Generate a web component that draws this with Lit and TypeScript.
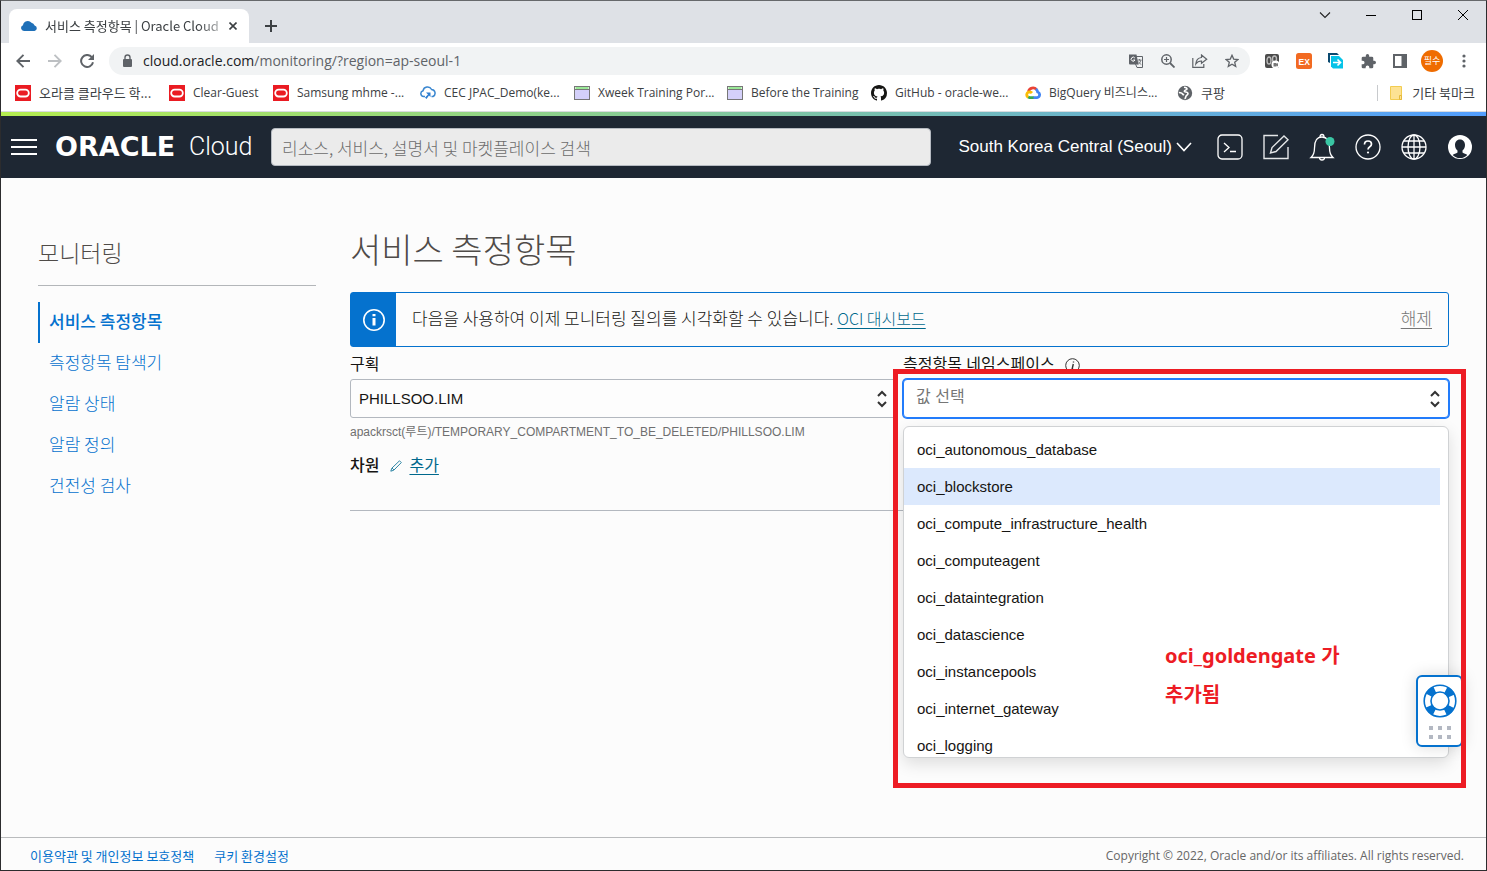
import { LitElement, html, css, svg } from "lit";
import { customElement, state } from "lit/decorators.js";
import { classMap } from "lit/directives/class-map.js";

const oracleMark = svg`<rect width="16" height="16" fill="#ea1b22"/><rect x="2.2" y="4.7" width="11.6" height="6.8" rx="3.4" fill="none" stroke="#fff" stroke-width="1.8"/>`;
const pageMark = svg`<rect x=".5" y="1.5" width="15" height="13" fill="#fff" stroke="#777"/><rect x="1" y="5" width="14" height="9" fill="#d4d0fa"/><path d="M1 4.5h14" stroke="#777"/><path d="M1.5 3h13" stroke="#6fe06a" stroke-width="1.4"/>`;
const cecMark = svg`<path d="M5 11.5H3.6A2.9 2.9 0 0 1 3 5.800A4.600 4.600 0 0 1 11.600 4.500A3.700 3.700 0 0 1 13 11.500H11.500" fill="none" stroke="#3a87d0" stroke-width="1.500"/><path d="M6 7.500h4.500V12L9 10.500L6.500 14L5 12.500L8 9.500z" fill="#2d7dd2"/>`;
const githubMark = svg`<path fill="#161614" d="M8 0C3.580 0 0 3.580 0 8c0 3.540 2.290 6.530 5.470 7.590.4.070.550-.170.550-.380 0-.190-.010-.820-.010-1.490-2.010.370-2.530-.490-2.690-.940-.090-.230-.480-.940-.820-1.130-.280-.150-.680-.520-.010-.530.630-.010 1.080.580 1.230.820.720 1.210 1.870.870 2.330.660.070-.520.280-.870.510-1.070-1.780-.200-3.640-.890-3.640-3.950 0-.870.310-1.590.820-2.150-.080-.200-.360-1.020.080-2.120 0 0 .670-.210 2.200.820.640-.180 1.320-.270 2-.270s1.360.090 2 .270c1.530-1.040 2.200-.820 2.200-.820.440 1.100.160 1.920.080 2.120.510.560.820 1.270.820 2.150 0 3.070-1.870 3.750-3.650 3.950.290.250.540.730.540 1.480 0 1.070-.010 1.930-.010 2.200 0 .210.150.460.550.380A8.010 8.010 0 0 0 16 8c0-4.420-3.580-8-8-8z"/>`;
const googleMark = svg`<g fill="none" stroke-width="2.800"><path d="M3.500 6.500A4.700 4.700 0 0 1 11.500 4.500" stroke="#ea4335"/><path d="M11 4A5 5 0 0 1 12.700 7A2.900 2.900 0 0 1 12 12.600H8" stroke="#4285f4"/><path d="M8.500 12.600H4.500L3 12" stroke="#34a853"/><path d="M3.200 12.200A2.900 2.900 0 0 1 4.500 6.800Q6 6.800 7 8" stroke="#fbbc05"/></g>`;
const globeMark = svg`<circle cx="8" cy="8" r="7.200" fill="#5f6368"/><path d="M7 2.300c2 .3 3.500.8 2.800 2.200c-1 .8-2.600.5-2.400 2c1 .8 3.500.2 3.600 2.100c-.2 1.500-2 1.500-2.200 3.200c0 1-.6 1.800-1.300 2" fill="none" stroke="#fff" stroke-width="1.600"/><path d="M1.800 7.500c2 0 3.800 1 5 2.800" stroke="#fff" stroke-width="1.700" fill="none"/>`;

const BOOKMARKS = [
  { label: "오라클 클라우드 학...", icon: oracleMark, korean: true },
  { label: "Clear-Guest", icon: oracleMark },
  { label: "Samsung mhme -...", icon: oracleMark },
  { label: "CEC JPAC_Demo(ke...", icon: cecMark },
  { label: "Xweek Training Por...", icon: pageMark },
  { label: "Before the Training", icon: pageMark },
  { label: "GitHub - oracle-we...", icon: githubMark },
  { label: "BigQuery 비즈니스...", icon: googleMark },
  { label: "쿠팡", icon: globeMark, korean: true },
];

const base = css`
  :host { display: block; box-sizing: border-box; }
  *, *::before, *::after { box-sizing: border-box; }
  button { font: inherit; color: inherit; background: none; border: 0; padding: 0; margin: 0; cursor: pointer; }
  svg { display: block; flex: none; }
`;

@customElement("browser-chrome")
class BrowserChrome extends LitElement {
  static styles = [base, css`
    :host { font: 12px/16px "Open Sans", "Noto Sans CJK KR", sans-serif; color: #3c4043; background: #fff; }
    .strip { display: flex; align-items: flex-start; height: 42px; background: #dee1e6; padding-left: 8px; }
    .tab { display: flex; align-items: center; width: 240px; height: 34px; margin-top: 8px; padding: 0 10px 0 12px; background: #fff; border-radius: 8px 8px 0 0; }
    .tab-title { flex: 1; margin-left: 8px; white-space: nowrap; -webkit-mask-image: linear-gradient(90deg, #000 88%, rgba(0,0,0,.4) 100%); }
    .korean { font: 13px/16px "Noto Sans CJK KR", sans-serif; }
    .sq { display: grid; place-items: center; width: 32px; height: 32px; flex: none; }
    .close { display: grid; place-items: center; width: 12px; height: 16px; margin-left: 8px; }
    .plus { margin: 9px 0 0 6px; }
    .wins { display: flex; margin-left: auto; }
    .win { display: grid; place-items: center; width: 46px; height: 28px; }
    .bar { display: flex; align-items: center; height: 36px; padding: 0 6px; }
    .omni { display: flex; align-items: center; flex: 1; height: 28px; margin-left: 6px; padding: 0 2px 0 10px; background: #f1f3f4; border-radius: 14px; }
    .url { flex: 1; min-width: 0; margin-left: 8px; font-size: 14px; line-height: 20px; color: #5f6368; white-space: nowrap; }
    .host { color: #202124; }
    .exts { display: flex; margin-left: 6px; }
    .me { width: 22px; height: 22px; border-radius: 11px; background: #ef6c00; color: #fff; font-size: 9px; line-height: 22px; text-align: center; }
    .marks { display: flex; align-items: center; height: 33px; padding: 0 11px 5px 14px; border-bottom: 1px solid #dadce0; }
    .list { display: grid; grid-template-columns: 154px 104px 147px 154px 153px 144px 154px 152px 60px; }
    .mark { display: flex; align-items: center; gap: 8px; color: inherit; text-decoration: none; white-space: nowrap; }
    .other { margin-left: auto; padding-left: 10px; border-left: 1px solid #c8cacd; }
  `];

  render() {
    return html`
      <div class="strip">
        <div class="tab">
          <svg width="16" height="16" viewBox="0 0 16 16"><path d="M3 13A3 3 0 0 1 2 7.200A4.800 4.800 0 0 1 10.500 4.800A4.200 4.200 0 0 1 13.600 7.500A2.800 2.800 0 0 1 13.500 13z" fill="#1f70b8"/></svg>
          <span class="tab-title korean">서비스 측정항목 | Oracle Cloud</span>
          <button class="close" aria-label="Close tab"><svg width="8" height="8" viewBox="0 0 8 8"><path d="M.500 .500l7 7M7.500 .500l-7 7" stroke="#3c4043" stroke-width="1.600"/></svg></button>
        </div>
        <button class="sq plus" aria-label="New tab"><svg width="12" height="12" viewBox="0 0 12 12"><path d="M6 0v12M0 6h12" stroke="#3c4043" stroke-width="2"/></svg></button>
        <div class="wins">
          <button class="win" aria-label="Tab search"><svg width="12" height="12" viewBox="0 0 12 12"><path d="M1 3.500l5 5l5-5" fill="none" stroke="#222" stroke-width="1.100"/></svg></button>
          <button class="win" aria-label="Minimize"><svg width="10" height="10" viewBox="0 0 10 10"><path d="M0 5.500h10" stroke="#000"/></svg></button>
          <button class="win" aria-label="Maximize"><svg width="10" height="10" viewBox="0 0 10 10"><rect x=".5" y=".5" width="9" height="9" fill="none" stroke="#000"/></svg></button>
          <button class="win" aria-label="Close"><svg width="10" height="10" viewBox="0 0 10 10"><path d="M0 0l10 10M10 0L0 10" stroke="#000"/></svg></button>
        </div>
      </div>
      <div class="bar">
        <button class="sq" aria-label="Back"><svg width="14" height="14" viewBox="0 0 14 14"><path d="M14 7H1.500M7.500 .800L1.300 7l6.200 6.200" fill="none" stroke="#5f6368" stroke-width="1.900"/></svg></button>
        <button class="sq" aria-label="Forward"><svg width="14" height="14" viewBox="0 0 14 14"><path d="M0 7h12.500M6.500 .800L12.700 7l-6.200 6.200" fill="none" stroke="#bdc0c3" stroke-width="1.900"/></svg></button>
        <button class="sq" aria-label="Reload"><svg width="14" height="14" viewBox="0 0 14 14"><path d="M11.800 3.200A6 6 0 1 0 13 8.200" fill="none" stroke="#5f6368" stroke-width="2"/><path d="M14 0v6H8z" fill="#5f6368"/></svg></button>
        <div class="omni">
          <svg width="16" height="16" viewBox="0 0 16 16"><rect x="4" y="6" width="9" height="8" rx="1" fill="#5f6368"/><path d="M6 6.500V4.500a2.500 2.500 0 0 1 5 0v2" fill="none" stroke="#5f6368" stroke-width="1.400"/></svg>
          <span class="url"><span class="host">cloud.oracle.com</span>/monitoring/?region=ap-seoul-1</span>
          <button class="sq" aria-label="Translate"><svg width="14" height="14" viewBox="0 0 14 14"><path d="M6 2.500h7.500v11H8L6.500 10" fill="#f1f3f4" stroke="#5f6368"/><path d="M0 .500h7.500l2 10H1a1 1 0 0 1-1-1z" fill="#5f6368"/><path d="M5.800 4A2 2 0 1 0 6 6H4.300" fill="none" stroke="#fff"/><path d="M8.500 6h4M10.500 5v1.500M12 6q-.5 2.500-3 4.500M9.300 7.500q1 2 3 3" fill="none" stroke="#5f6368" stroke-width=".8"/></svg></button>
          <button class="sq" aria-label="Zoom"><svg width="14" height="14" viewBox="0 0 14 14"><circle cx="5.500" cy="5.500" r="4.700" fill="none" stroke="#5f6368" stroke-width="1.500"/><path d="M9 9l4.500 4.500" stroke="#5f6368" stroke-width="1.800"/><path d="M5.500 3v5M3 5.500h5" stroke="#5f6368" stroke-width="1.200"/></svg></button>
          <button class="sq" aria-label="Share"><svg width="16" height="14" viewBox="0 0 16 14"><path d="M.8 4v9.300h11V10" fill="none" stroke="#5f6368" stroke-width="1.200"/><path d="M9.500 1l5.200 4.300l-5.200 4V7Q6 6.800 3.800 10Q4.300 4 9.500 3.500z" fill="none" stroke="#5f6368" stroke-width="1.200"/></svg></button>
          <button class="sq" aria-label="Bookmark"><svg width="14" height="14" viewBox="0 0 14 14"><path d="M7 1.300l1.700 3.800l4.200.4l-3.200 2.800l1 4.100L7 10.300l-3.700 2.100l1-4.100L1.100 5.500l4.200-.4z" fill="none" stroke="#5f6368" stroke-width="1.300"/></svg></button>
        </div>
        <div class="exts">
          <button class="sq" aria-label="Recorder"><svg width="16" height="16" viewBox="0 0 16 16"><rect x="1" y="1" width="14" height="14" rx="2" fill="#4c4c4c"/><ellipse cx="5" cy="7.500" rx="2" ry="3.500" fill="none" stroke="#bbb" stroke-width="1.400"/><ellipse cx="10.500" cy="6" rx="2" ry="3" fill="none" stroke="#bbb" stroke-width="1.400"/><circle cx="11.500" cy="11.500" r="4" fill="#fff"/><path d="M9.500 10h3v1l1.500-1v3.500l-1.500-1v1h-3z" fill="#777"/></svg></button>
          <button class="sq" aria-label="EX"><svg width="16" height="16" viewBox="0 0 16 16"><rect width="16" height="16" rx="2.500" fill="#f26a21"/><text x="2.500" y="11.500" font-family="Liberation Sans" font-weight="700" font-size="8.500" fill="#fff">EX</text></svg></button>
          <button class="sq" aria-label="Transfer"><svg width="16" height="16" viewBox="0 0 16 16"><path d="M0 0h9l2 2H2v8L0 9z" fill="#0b4a70"/><path d="M3 3h8l4 4v8.500H5l-2-2z" fill="#06c3e8"/><path d="M5 9.500h7M9.500 6.500l3 3l-3 3" fill="none" stroke="#fff" stroke-width="1.700"/></svg></button>
          <button class="sq" aria-label="Extensions"><svg width="15" height="15" viewBox="0 0 22 22"><path fill="#5f6368" d="M19.500 10H18V6a2 2 0 0 0-2-2h-4V2.500a2.500 2.500 0 0 0-5 0V4H3a2 2 0 0 0-2 2v3.800h1.500a2.700 2.700 0 0 1 0 5.400H1V19a2 2 0 0 0 2 2h3.800v-1.500a2.700 2.700 0 0 1 5.400 0V21H16a2 2 0 0 0 2-2v-4h1.500a2.500 2.500 0 0 0 0-5z"/></svg></button>
          <button class="sq" aria-label="Side panel"><svg width="14" height="14" viewBox="0 0 14 14"><rect x="1" y="1" width="12" height="12" fill="none" stroke="#5f6368" stroke-width="2"/><rect x="8.500" y="1" width="5" height="12" fill="#5f6368"/></svg></button>
          <button class="sq" aria-label="Profile"><span class="me">필수</span></button>
          <button class="sq" aria-label="Menu"><svg width="4" height="14" viewBox="0 0 4 14"><g fill="#5f6368"><circle cx="2" cy="2" r="1.600"/><circle cx="2" cy="7" r="1.600"/><circle cx="2" cy="12" r="1.600"/></g></svg></button>
        </div>
      </div>
      <div class="marks">
        <nav class="list">
          ${BOOKMARKS.map((b) => html`<a class=${classMap({ mark: true, korean: !!b.korean })} href="#"><svg width="16" height="16" viewBox="0 0 16 16">${b.icon}</svg>${b.label}</a>`)}
        </nav>
        <a class="mark other korean" href="#"><svg width="16" height="16" viewBox="0 0 16 16"><path d="M2.500 1.500h11v13h-11z" fill="#fde293" stroke="#f2cc50"/><path d="M11.500 10.500h2v4h-2z" fill="#fde293" stroke="#e5b93c"/></svg>기타 북마크</a>
      </div>`;
  }
}

@customElement("console-header")
class ConsoleHeader extends LitElement {
  static styles = [base, css`
    :host { background: #1e2733; color: #fff; }
    .rainbow { height: 4px; background: linear-gradient(90deg, #b4ed50, #7bc2a9 55%, #529eff); }
    .row { display: flex; align-items: center; height: 62px; padding: 0 13px 0 10px; }
    .brand { display: flex; align-items: center; width: 216px; margin-left: 18px; white-space: nowrap; }
    .oracle { width: 134px; font: 700 27px/32px "DejaVu Sans", sans-serif; }
    .cloud { font: 300 25px/32px Roboto, sans-serif; }
    .search { flex: 0 1 660px; height: 38px; padding: 0 10px; border: 1px solid #b5bac1; border-radius: 4px; background: #ebebeb; font: 300 17px/20px "Noto Sans CJK KR", sans-serif; color: #222; outline: 0; }
    .search::placeholder { color: #6c6c6c; opacity: 1; }
    .region { display: flex; align-items: center; gap: 4px; margin-left: auto; font: 17px/20px "Liberation Sans", sans-serif; white-space: nowrap; }
    .tools { display: flex; gap: 20px; margin-left: 25px; }
  `];

  render() {
    return html`
      <div class="rainbow"></div>
      <header class="row">
        <button aria-label="메뉴"><svg width="26" height="16" viewBox="0 0 26 16"><path d="M0 1h26M0 8h26M0 15h26" stroke="#fff" stroke-width="2"/></svg></button>
        <div class="brand"><span class="oracle">ORACLE</span><span class="cloud">Cloud</span></div>
        <input class="search" type="search" aria-label="검색" placeholder="리소스, 서비스, 설명서 및 마켓플레이스 검색" />
        <button class="region">South Korea Central (Seoul)<svg width="16" height="10" viewBox="0 0 16 10"><path d="M1 1l7 7.500L15 1" fill="none" stroke="#fff" stroke-width="1.600"/></svg></button>
        <div class="tools">
          <button aria-label="Cloud Shell"><svg width="26" height="26" viewBox="0 0 26 26" fill="none" stroke="#fff" stroke-width="1.300"><rect x="1" y="1" width="24" height="24" rx="4"/><path d="M7 9l5 4.500L7 18M13 17.500h6"/></svg></button>
          <button aria-label="Editor"><svg width="26" height="26" viewBox="0 0 26 26" fill="none" stroke="#e4e6e8" stroke-width="1.400"><path d="M15 1.500H1v23h24V13"/><path d="M7.500 19l1.500-5.500L21 2l4 3.800L13 17.500z"/></svg></button>
          <button aria-label="알림"><svg width="26" height="28" viewBox="0 0 26 28" fill="none" stroke="#fff" stroke-width="1.300"><path d="M2 24.500q3.500-3 3.500-9.500Q5.500 4 13 4t7.500 11q0 6.500 3.500 9.500z"/><path d="M11 4q0-2.500 2-2.500T15 4M10.500 24.500q0 2.500 2.500 2.500t2.500-2.500"/><circle cx="21" cy="8.500" r="4.500" fill="#3ac6a4" stroke="none"/></svg></button>
          <button aria-label="도움말"><svg width="26" height="26" viewBox="0 0 26 26" fill="none" stroke="#fff" stroke-width="1.300"><circle cx="13" cy="13" r="12"/><path d="M9.500 10.500q0-3.500 3.500-3.500t3.500 3q0 1.700-1.700 2.700T13 15.500" stroke-width="1.700"/><circle cx="13" cy="18.500" r="1.100" fill="#fff" stroke="none"/></svg></button>
          <button aria-label="언어"><svg width="26" height="26" viewBox="0 0 26 26" fill="none" stroke="#fff" stroke-width="1.300"><circle cx="13" cy="13" r="12"/><ellipse cx="13" cy="13" rx="6" ry="12"/><path d="M13 1v24M1 13h24M3 7h20M3 19h20"/></svg></button>
          <button aria-label="프로파일"><svg width="26" height="26" viewBox="0 0 26 26"><circle cx="13" cy="13" r="12" fill="#fff"/><path d="M13 5.500c3.300 0 5 2.500 5 5.500c0 2.300-1 4.500-2.500 5.600v1.900c1.500 1 3.600 1.400 4.800 2.400Q17.500 24 13 24t-7.300-3.100c1.200-1 3.300-1.400 4.800-2.400v-1.900C9 15.500 8 13.300 8 11c0-3 1.700-5.500 5-5.500z" fill="#1e2733"/></svg></button>
        </div>
      </header>`;
  }
}

const NAMESPACES = [
  "oci_autonomous_database",
  "oci_blockstore",
  "oci_compute_infrastructure_health",
  "oci_computeagent",
  "oci_dataintegration",
  "oci_datascience",
  "oci_instancepools",
  "oci_internet_gateway",
  "oci_logging",
];

const chevrons = html`<svg class="chev" width="12" height="18" viewBox="0 0 12 18"><path d="M2 6l4-4l4 4M2 12l4 4l4-4" fill="none" stroke="#333" stroke-width="2"/></svg>`;

@customElement("metrics-page")
class MetricsPage extends LitElement {
  @state() private active = 1;

  static styles = [base, css`
    :host { display: flex; position: relative; padding: 51px 37px 0; font: 15px/20px "Liberation Sans", "Noto Sans CJK KR", sans-serif; color: #161513; background: #fcfcfc; }
    .side { flex: none; width: 278px; margin-right: 34px; }
    .side-title { margin: 0 0 16px; padding: 6px 0 16px; border-bottom: 1px solid #b3b6b9; font: 300 23px/34px "Noto Sans CJK KR", sans-serif; color: #4f4b48; }
    .menu { list-style: none; margin: 0; padding: 0; font: 300 17px/20px "Noto Sans CJK KR", sans-serif; }
    .item { display: flex; align-items: center; height: 41px; padding: 0 0 4px 9px; border-left: 2px solid transparent; color: #0572ce; text-decoration: none; }
    .item.current { border-color: #0572ce; font-weight: 500; }
    .body { flex: 1; min-width: 0; }
    .title { margin: 0 0 23px; font: 300 34px/40px "Noto Sans CJK KR", sans-serif; color: #4f4b48; }
    .banner { display: flex; height: 55px; border: 1px solid #0572ce; border-radius: 3px; }
    .mark { display: grid; place-items: center; width: 45px; background: #0572ce; }
    .msg { flex: 1; margin: 0; padding: 14px 16px; font: 300 17px/22px "Noto Sans CJK KR", sans-serif; }
    .link { color: #00688c; font-size: 16px; text-underline-offset: 3px; }
    .dismiss { padding: 0 16px; color: #767676; text-decoration: underline; text-underline-offset: 3px; font-size: 17px; font-weight: 300; }
    .fields { display: grid; grid-template-columns: 1fr 1fr; gap: 7px; padding: 7px 0 0; }
    .field { position: relative; min-width: 0; }
    .label { display: flex; align-items: center; gap: 10px; height: 22px; font-size: 16px; }
    .box { position: relative; height: 39px; margin-top: 3px; }
    .control { width: 100%; height: 100%; padding: 0 8px; border: 1px solid #b3b8bf; border-radius: 3px; background: #fdfdfd; font: inherit; color: #161513; appearance: none; outline: 0; }
    .control.focus { padding: 0 12px 3px; border-color: #227cfb; border-radius: 4px; background: #fff; box-shadow: 0 0 0 1px #227cfb; font-size: 16px; }
    .control::placeholder { color: #767676; opacity: 1; }
    .chev { position: absolute; right: 8px; top: 11px; }
    .path { margin: 4px 0 0; font-size: 12px; line-height: 20px; color: #6f6f6f; }
    .popup { position: absolute; z-index: 2; top: 72px; left: 0; right: 0; height: 332px; margin: 0; padding: 4px 8px 0 0; list-style: none; overflow: hidden; border: 1px solid #d0d2d4; border-radius: 6px; background: #fff; box-shadow: 0 6px 16px rgba(0,0,0,.12); }
    .opt { height: 37px; padding-left: 13px; line-height: 37px; }
    .opt.on { background: #dce9fd; }
    .note { position: absolute; z-index: 4; top: 15px; left: -10px; right: -17px; height: 419px; padding: 262px 110px 0 267px; border: 5px solid #ed1c24; color: #ed1c24; font: 700 20px/39px "Noto Sans", "Noto Sans CJK KR", sans-serif; pointer-events: none; }
    .note-text { margin: 0; }
    .dims { display: flex; align-items: center; gap: 7px; margin: 14px 0 0; padding-bottom: 34px; border-bottom: 1px solid #b3b8bf; }
    .dims-label { margin-right: 4px; font-size: 16px; font-weight: 500; }
    .help { position: absolute; z-index: 3; right: 23px; top: 497px; display: flex; flex-direction: column; align-items: center; justify-content: center; gap: 8px; width: 47px; height: 72px; border: 2px solid #0572ce; border-radius: 6px; background: #fff; box-shadow: 0 0 16px rgba(0,0,0,.15); }
  `];

  render() {
    const side = ["서비스 측정항목", "측정항목 탐색기", "알람 상태", "알람 정의", "건전성 검사"];
    return html`
      <nav class="side">
        <h2 class="side-title">모니터링</h2>
        <ul class="menu">${side.map((s, i) => html`<li><a href="#" class=${classMap({ item: true, current: i === 0 })}>${s}</a></li>`)}</ul>
      </nav>
      <main class="body">
        <h1 class="title">서비스 측정항목</h1>
        <div class="banner">
          <div class="mark"><svg width="24" height="24" viewBox="0 0 24 24" fill="none" stroke="#fff" stroke-width="1.600"><circle cx="12" cy="12" r="10.200"/><path d="M12 10v7.500M12 6v2.200" stroke-width="3"/></svg></div>
          <p class="msg">다음을 사용하여 이제 모니터링 질의를 시각화할 수 있습니다. <a class="link" href="#">OCI 대시보드</a></p>
          <button class="dismiss">해제</button>
        </div>
        <div class="fields">
          <div class="field">
            <label class="label" for="compartment">구획</label>
            <div class="box"><select class="control" id="compartment"><option>PHILLSOO.LIM</option></select>${chevrons}</div>
            <p class="path">apackrsct(루트)/TEMPORARY_COMPARTMENT_TO_BE_DELETED/PHILLSOO.LIM</p>
          </div>
          <div class="field">
            <label class="label" for="namespace">측정항목 네임스페이스<svg width="15" height="15" viewBox="0 0 15 15" fill="none" stroke="#333"><circle cx="7.500" cy="7.500" r="6.800"/><path d="M8.300 6l-1.300 5.500h1.500M8.500 3.500v1" stroke-width="1.400"/></svg></label>
            <div class="box"><input class="control focus" id="namespace" role="combobox" aria-expanded="true" aria-controls="options" placeholder="값 선택" />${chevrons}</div>
            <ul class="popup" id="options" role="listbox">
              ${NAMESPACES.map((n, i) => html`<li role="option" class=${classMap({ opt: true, on: i === this.active })} @mouseenter=${() => (this.active = i)}>${n}</li>`)}
            </ul>
            <div class="note"><p class="note-text">oci_goldengate 가<br />추가됨</p></div>
          </div>
        </div>
        <div class="dims">
          <span class="dims-label">차원</span>
          <svg width="12" height="12" viewBox="0 0 12 12"><path d="M.8 11.200l1-3L9.500 .800l1.800 1.800L3.800 10.200zM2 8l2 2" fill="none" stroke="#2f86a5"/></svg>
          <a class="link" href="#">추가</a>
        </div>
      </main>
      <button class="help" aria-label="지원">
        <svg width="34" height="34" viewBox="0 0 34 34" fill="none"><circle cx="17" cy="17" r="12.300" stroke="#0572ce" stroke-width="7.500" stroke-dasharray="8 11.320" stroke-dashoffset="-5.660"/><circle cx="17" cy="17" r="15.800" stroke="#0572ce" stroke-width="1.600"/><circle cx="17" cy="17" r="9" stroke="#0572ce" stroke-width="1.600"/></svg>
        <svg width="22" height="13" viewBox="0 0 22 13" fill="#b3b8c2"><path d="M0 0h4v4H0zM9 0h4v4H9zM18 0h4v4h-4zM0 9h4v4H0zM9 9h4v4H9zM18 9h4v4h-4z"/></svg>
      </button>`;
  }
}

@customElement("app-root")
class AppRoot extends LitElement {
  static styles = [base, css`
    :host { display: flex; flex-direction: column; min-height: 100vh; border: 1px solid #2c2c2e; border-top-color: #66686b; background: #fcfcfc; }
    .page { flex: 1; }
    .foot { display: flex; gap: 20px; align-items: center; height: 33px; padding: 3px 22px 0 29px; border-top: 1px solid #b9bbbd; font: 13px/18px "Noto Sans CJK KR", sans-serif; color: #666; }
    .foot-link { color: #0572ce; text-decoration: none; }
    .copy { margin-left: auto; font: 12px/18px "Open Sans", sans-serif; }
  `];

  render() {
    return html`
      <browser-chrome></browser-chrome>
      <console-header></console-header>
      <metrics-page class="page"></metrics-page>
      <footer class="foot">
        <a class="foot-link" href="#">이용약관 및 개인정보 보호정책</a>
        <a class="foot-link" href="#">쿠키 환경설정</a>
        <span class="copy">Copyright © 2022, Oracle and/or its affiliates. All rights reserved.</span>
      </footer>`;
  }
}
